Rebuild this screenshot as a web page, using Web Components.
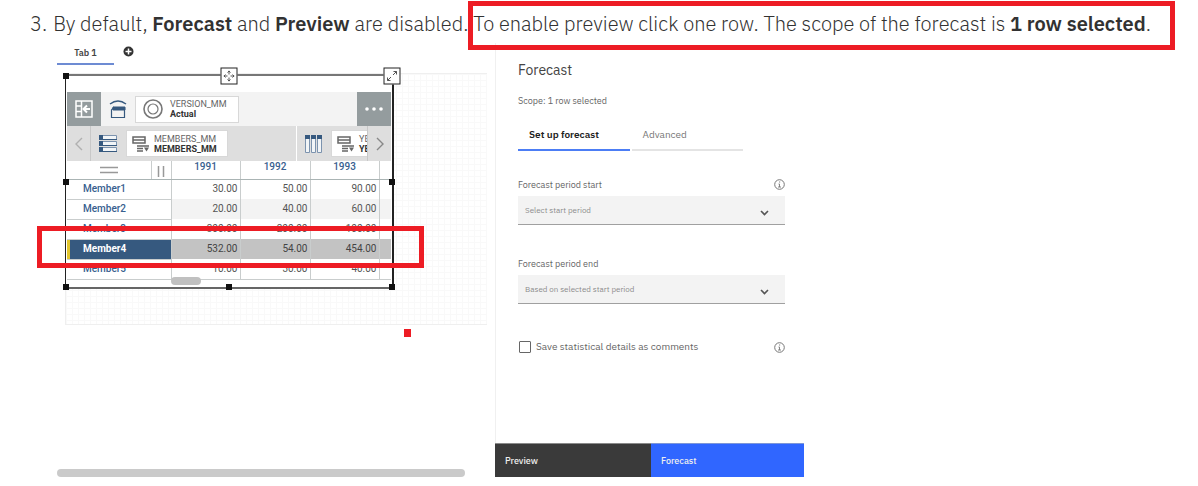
<!DOCTYPE html>
<html lang="en">
<head>
<meta charset="utf-8">
<title>Forecast</title>
<style>
    body {
        margin: 0;
        background: #fff;
        color: #323232;
        font-family: "IBM Plex Sans", Inter, sans-serif;
    }
</style>
</head>
<body>
<guide-step>
    <guide-note number="3">By default, <b>Forecast</b> and <b>Preview</b> are disabled. To enable preview click one row. The scope of the forecast is <b>1 row selected</b>.</guide-note>
    <work-space>
        <book-view slot="book">
            <cube-viewer></cube-viewer>
        </book-view>
        <forecast-panel slot="panel"></forecast-panel>
    </work-space>
    <mark-box style="--x:468px;--y:1px;--w:707px;--h:49px"></mark-box>
    <mark-box style="--x:37px;--y:226px;--w:387px;--h:42px"></mark-box>
    <mark-box solid style="--x:404px;--y:329px;--w:7px;--h:8px"></mark-box>
</guide-step>
<script>
const define = (name, html, setup) => customElements.define(name, class extends HTMLElement {
    constructor() {
        super()
            .attachShadow({ mode: "open" })
            .innerHTML = html;
    }
    connectedCallback() {
        if (setup) setup.call(this, this.shadowRoot);
    }
});

define("guide-step", `
    <style>
    :host { display: block; position: relative; }
    </style>
    <slot></slot>`);

define("guide-note", `
    <style>
    :host {
        display: flex;
        gap: 6px;
        padding: 10px 0 5px 30px;
        font-size: 20px;
        font-weight: 300;
        line-height: 28px;
        white-space: nowrap;
    }
    ::slotted(b) { font-weight: 600; }
    </style>
    <span class="number"></span>
    <span><slot></slot></span>`,
    function (root) {
        root.querySelector(".number").textContent = this.getAttribute("number") + ".";
    });

// red annotation rectangle lying over the page
define("mark-box", `
    <style>
    :host {
        position: absolute;
        box-sizing: border-box;
        left: var(--x);
        top: var(--y);
        width: var(--w);
        height: var(--h);
        border: 5px solid #ed1c24;
        pointer-events: none;
    }
    :host([solid]) { border: 0; background: #ed1c24; }
    </style>`);

define("work-space", `
    <style>
    :host {
        display: grid;
        grid-template-columns: 438fr 309fr 394fr;
        padding-left: 57px;
    }
    </style>
    <slot name="book"></slot>
    <slot name="panel"></slot>`);

define("book-view", `
    <style>
    :host { display: flex; flex-direction: column; }
    .tabs {
        display: flex;
        align-items: center;
        gap: 9px;
        height: 22px;
        margin-bottom: 8px;
    }
    button {
        box-sizing: border-box;
        padding: 0;
        border: 0;
        background: none;
        color: #444;
        font: 600 9px "IBM Plex Sans", Inter, sans-serif;
    }
    .tab {
        width: 57px;
        height: 22px;
        padding-bottom: 2px;
        border-bottom: 2px solid #6d8bd3;
    }
    .add { display: flex; padding-bottom: 6px; }
    .canvas {
        position: relative;
        height: 250px;
        margin: 0 8px auto;
        border: 1px solid #efefef;
        border-right: 0;
        background:
            repeating-linear-gradient(90deg, #f9f9f9 0 1px, transparent 1px 6px),
            repeating-linear-gradient(#f9f9f9 0 1px, transparent 1px 6px);
    }
    .scroll {
        height: 8px;
        margin-right: 30px;
        border-radius: 4px;
        background: #cacaca;
    }
    </style>
    <div class="tabs">
        <button class="tab">Tab 1</button>
        <button class="add" aria-label="Add tab">
            <svg width="11" height="11" viewBox="0 0 11 11"><circle cx="5.500" cy="5.500" r="5" fill="#333"/><path d="M5.500 2.500v6M2.500 5.500h6" stroke="#fff" stroke-width="1.500"/></svg>
        </button>
    </div>
    <div class="canvas"><slot></slot></div>
    <div class="scroll"></div>`);

define("member-tile", `
    <style>
    :host {
        display: flex;
        flex: none;
        align-items: center;
        gap: 7px;
        box-sizing: border-box;
        height: 27px;
        padding: 0 7px;
        border: 1px solid #d8d8d8;
        background: #fff;
        color: #666;
        font: 9px/10px Roboto, sans-serif;
        white-space: nowrap;
    }
    b { display: block; color: #333; font-weight: 700; }
    .set { display: none; }
    :host([kind=set]) { gap: 4px; padding: 0 5px; }
    :host([kind=set]) .set { display: block; }
    :host([kind=set]) .single { display: none; }
    </style>
    <svg class="single" width="20" height="20" viewBox="0 0 20 20" fill="none" stroke="#777"><circle cx="10" cy="10" r="9" stroke-width="1.600"/><circle cx="10" cy="10" r="5" stroke-width="1.200"/></svg>
    <svg class="set" width="18" height="18" viewBox="0 0 18 18" fill="none" stroke="#666"><path d="M1 2h12v6H1zM1 5h12" stroke-width="1.500"/><path d="M5 11h12M5 13.500h6M5 16h6" stroke-width="1.300"/><path d="M12 12.500h5l-2.500 4z" fill="#666" stroke="none"/></svg>
    <span><span class="name"></span><b><slot></slot></b></span>`,
    function (root) {
        root.querySelector(".name").textContent = this.getAttribute("name");
    });

define("cube-viewer", `
    <style>
    :host {
        position: absolute;
        left: -1px;
        top: 0;
        box-sizing: border-box;
        width: 329px;
        height: 215px;
        padding: 16px 1px 0;
        border: solid #222;
        border-width: 2px 2px 2px 1px;
        border-top-color: #777;
        border-bottom-color: #666;
        background: #fff;
        font-family: Roboto, sans-serif;
    }
    .bar {
        display: flex;
        align-items: center;
        height: 34px;
        background: #f3f3f3;
    }
    .bar button {
        display: grid;
        place-items: center;
        flex: none;
        width: 34px;
        height: 34px;
        padding: 0;
        border: 0;
        background: #949c9e;
    }
    .bar > svg { flex: none; margin: 0 8px; }
    .more { margin-left: auto; }
    .dims { height: 35px; background: #dedede; }
    .dims button {
        width: 24px;
        height: 35px;
        background: #dedede;
        border-right: 1px solid #c8c8c8;
    }
    .dims .next { border: 0; border-left: 1px solid #c8c8c8; }
    .rows, .cols {
        display: flex;
        align-items: center;
        height: 35px;
        overflow: hidden;
    }
    .rows { flex: 1; border-right: 1px solid #fff; }
    .rows svg { margin: 0 9px 0 8px; }
    .cols { width: 70px; }
    .cols svg { flex: none; margin: 0 9px 0 8px; }
    table {
        width: 100%;
        border-collapse: collapse;
        table-layout: fixed;
        color: #555;
        font-size: 10px;
        line-height: 12px;
    }
    th, td {
        box-sizing: border-box;
        height: 20px;
        padding: 0 2px 0 0;
        border-right: 1px solid #c9cdcd;
        text-align: right;
        font-weight: 400;
    }
    thead th {
        height: 18px;
        padding: 0;
        border-bottom: 1px solid #aab4b4;
        text-align: center;
        color: #38608f;
        font-weight: 500;
        vertical-align: top;
    }
    thead th svg { display: block; margin: 5px auto 0; }
    tbody th {
        padding: 0 0 0 16px;
        border-bottom: 1px solid #c9cdcd;
        text-align: left;
        color: #38608f;
        font-weight: 500;
    }
    tr > :last-child { border-right: 0; }
    tbody tr:nth-child(even) td { background: #f3f3f3; }
    tbody tr.selected td { background: #c3c3c3; color: #444; }
    tbody tr.selected th {
        background: #36597f;
        box-shadow: inset 3px 0 #e2c62d;
        color: #fff;
        font-weight: 700;
    }
    tbody tr:last-child > * { border-bottom: 1px solid #c9cdcd; }
    .scroll {
        position: absolute;
        left: 105px;
        bottom: 2px;
        width: 30px;
        height: 8px;
        border-radius: 4px;
        background: #c0c0c0;
    }
    .handle {
        position: absolute;
        width: 6px;
        height: 6px;
        background: #111;
        transform: translate(-50%, -50%);
    }
    .tool {
        position: absolute;
        display: grid;
        place-items: center;
        box-sizing: border-box;
        width: 17px;
        height: 17px;
        padding: 0;
        border: 1px solid #222;
        background: #fff;
        transform: translate(-50%, -50%);
    }
    </style>
    <div class="bar">
        <button aria-label="Overview">
            <svg width="18" height="18" viewBox="0 0 18 18" fill="none" stroke="#fff"><path d="M1 1h16v16H1zM6.500 1v16M1 6h5M1 11.500h5" stroke-width="1.500"/><path d="M15 9H9M12 5.500 8.500 9l3.500 3.500" stroke-width="2"/></svg>
        </button>
        <svg width="18" height="20" viewBox="0 0 18 20" fill="none" stroke="#36597f"><path d="M1 5q8-6 16 0" stroke-width="1.500"/><path d="M4 8h12v3H4z" fill="#36597f"/><path d="M5 8 2.500 11v7.500h13V9" stroke-width="1.200"/></svg>
        <member-tile name="VERSION_MM" style="width:104px">Actual</member-tile>
        <button class="more" aria-label="More">
            <svg width="18" height="4" viewBox="0 0 18 4" fill="#fff"><circle cx="2" cy="2" r="1.800"/><circle cx="9" cy="2" r="1.800"/><circle cx="16" cy="2" r="1.800"/></svg>
        </button>
    </div>
    <div class="bar dims">
        <button aria-label="Previous"><svg width="8" height="14" viewBox="0 0 8 14" fill="none" stroke="#b0b0b0" stroke-width="1.400"><path d="M7 1 1 7l6 6"/></svg></button>
        <div class="rows">
            <svg width="18" height="18" viewBox="0 0 18 18" fill="#f2f5f7" stroke="#7c93ae"><path d="M.5 .5h17v4H.5zM.5 6.500h17v4H.5zM.5 12.500h17v4H.5z"/><path d="M0 0h4v5H0zM0 6h4v5H0zM0 12h4v5H0zM4 4h14v1H4zM4 10h14v1H4zM4 16h14v1H4z" fill="#36597f" stroke="none"/></svg>
            <member-tile kind="set" name="MEMBERS_MM" style="width:102px">MEMBERS_MM</member-tile>
        </div>
        <div class="cols">
            <svg width="17" height="18" viewBox="0 0 17 18" fill="#f2f5f7" stroke="#7c93ae"><path d="M.5 .5h4v17h-4zM6.500 .5h4v17h-4zM12.500 .5h4v17h-4z"/><path d="M0 0h5v4H0zM6 0h5v4H6zM12 0h5v4h-5z" fill="#36597f" stroke="none"/></svg>
            <member-tile kind="set" name="YEARS_MM">YEARS_MM</member-tile>
        </div>
        <button class="next" aria-label="Next"><svg width="8" height="14" viewBox="0 0 8 14" fill="none" stroke="#888" stroke-width="1.400"><path d="m1 1 6 6-6 6"/></svg></button>
    </div>
    <table>
        <colgroup><col style="width:84px"><col style="width:20px"><col style="width:69px"><col style="width:70px"><col style="width:69px"><col></colgroup>
        <thead>
            <tr>
                <th aria-label="Rows"><svg width="18" height="8" viewBox="0 0 18 8" stroke="#999" stroke-width="1.500"><path d="M0 1.500h18M0 6.500h18"/></svg></th>
                <th aria-label="Columns"><svg width="8" height="11" viewBox="0 0 8 11" stroke="#999" stroke-width="1.500"><path d="M1.500 0v11M6.500 0v11"/></svg></th>
                <th>1991</th><th>1992</th><th>1993</th><th></th>
            </tr>
        </thead>
        <tbody></tbody>
    </table>
    <div class="scroll"></div>
    <span class="handle" style="left:0;top:0"></span>
    <span class="handle" style="left:0;top:50%"></span>
    <span class="handle" style="left:0;top:100%"></span>
    <span class="handle" style="left:50%;top:100%"></span>
    <span class="handle" style="left:100%;top:50%"></span>
    <span class="handle" style="left:100%;top:100%"></span>
    <button class="tool" style="left:50%;top:0" aria-label="Move"><svg width="11" height="11" viewBox="0 0 11 11" fill="none" stroke="#555"><path d="M5.500 0v4M5.500 7v4M0 5.500h4M7 5.500h4M4 2l1.500-1.500L7 2M4 9l1.500 1.500L7 9M2 4 .5 5.500 2 7M9 4l1.500 1.500L9 7"/></svg></button>
    <button class="tool" style="left:100%;top:0" aria-label="Expand"><svg width="11" height="11" viewBox="0 0 11 11" fill="none" stroke="#555"><path d="M1 10l3.500-3.500M6.500 4.500 10 1M7 1h3v3M1 7v3h3"/></svg></button>`,
    function (root) {
        const rows = [
            ["Member1", "30.00", "50.00", "90.00"],
            ["Member2", "20.00", "40.00", "60.00"],
            ["Member3", "300.00", "200.00", "100.00"],
            ["Member4", "532.00", "54.00", "454.00"],
            ["Member5", "10.00", "30.00", "40.00"]
        ];
        root.querySelector("tbody").innerHTML = rows.map(([name, ...values]) => `
            <tr${name == "Member4" ? ` class="selected"` : ""}>
                <th colspan="2" scope="row">${name}</th>
                ${values.map(value => `<td>${value}</td>`).join("")}<td></td>
            </tr>`).join("");
    });

define("info-icon", `
    <style>
    :host { display: block; height: 11px; }
    svg { display: block; }
    </style>
    <svg width="11" height="11" viewBox="0 0 11 11" fill="none" stroke="#777"><circle cx="5.500" cy="5.500" r="4.800"/><path d="M4.500 5h1v3M4 8h3M5 3h1.200" stroke-width=".9"/></svg>`);

define("period-select", `
    <style>
    :host { display: block; margin-bottom: 31px; }
    .head {
        display: flex;
        align-items: center;
        justify-content: space-between;
        height: 14px;
        margin-bottom: 5px;
    }
    label { color: #666; font-size: 9px; }
    .box { display: grid; align-items: center; }
    .box > * { grid-area: 1 / 1; }
    select {
        appearance: none;
        width: 100%;
        height: 29px;
        padding: 0 7px;
        border: 0;
        border-bottom: 1px solid #a0a0a0;
        border-radius: 0;
        background: #f3f3f3;
        color: #8c8c8c;
        font: 8px "IBM Plex Sans", Inter, sans-serif;
    }
    .box svg {
        justify-self: end;
        margin: 4px 16px 0 0;
        pointer-events: none;
    }
    info-icon[hidden] { display: none; }
    </style>
    <div class="head"><label for="period"></label><info-icon></info-icon></div>
    <div class="box">
        <select id="period"><option></option></select>
        <svg width="9" height="6" viewBox="0 0 9 6" fill="none" stroke="#555" stroke-width="1.600"><path d="M1 1l3.500 3.500L8 1"/></svg>
    </div>`,
    function (root) {
        root.querySelector("label").textContent = this.getAttribute("label");
        root.querySelector("option").textContent = this.getAttribute("value");
        root.querySelector("info-icon").hidden = !this.hasAttribute("info");
    });

define("forecast-panel", `
    <style>
    :host {
        display: flex;
        flex-direction: column;
    }
    .content {
        padding: 17px 19px 89px 22px;
        border-left: 1px solid #f0f0f0;
    }
    h2 {
        margin: 0 0 15px;
        color: #444;
        font-size: 14px;
        font-weight: 400;
        line-height: 20px;
    }
    p {
        margin: 0 0 14px;
        color: #666;
        font-size: 9px;
        line-height: 12px;
    }
    .tabs {
        display: flex;
        gap: 2px;
        margin: 0 42px 26px 0;
    }
    .tabs button {
        flex: 1;
        height: 30px;
        padding: 0 0 1px 11px;
        border: 0;
        border-bottom: 2px solid #e4e4e4;
        background: none;
        color: #777;
        text-align: left;
        font: 10px "IBM Plex Sans", Inter, sans-serif;
    }
    .tabs .active {
        border-color: #4c7df5;
        color: #222;
        font-weight: 600;
    }
    .check {
        display: flex;
        align-items: center;
        gap: 5px;
        margin-top: 36px;
        color: #666;
        font-size: 10px;
        line-height: 14px;
    }
    .check input {
        appearance: none;
        width: 12px;
        height: 12px;
        margin: 0 0 0 1px;
        border: 1px solid #666;
        border-radius: 1px;
    }
    .check info-icon { margin-left: auto; }
    footer {
        display: grid;
        grid-template-columns: 156fr 153fr;
        margin-top: auto;
    }
    footer button {
        height: 34px;
        padding: 0 10px;
        border: 0;
        border-top: 1px solid #8a8a8a;
        background: #3a3a3a;
        color: #eee;
        text-align: left;
        font: 500 9px "IBM Plex Sans", Inter, sans-serif;
    }
    footer .primary { border-color: #7d96d8; background: #3066ff; }
    </style>
    <div class="content">
        <h2>Forecast</h2>
        <p>Scope: 1 row selected</p>
        <div class="tabs">
            <button class="active">Set up forecast</button>
            <button>Advanced</button>
        </div>
        <period-select label="Forecast period start" value="Select start period" info></period-select>
        <period-select label="Forecast period end" value="Based on selected start period"></period-select>
        <div class="check">
            <input type="checkbox" id="save">
            <label for="save">Save statistical details as comments</label>
            <info-icon></info-icon>
        </div>
    </div>
    <footer>
        <button>Preview</button>
        <button class="primary">Forecast</button>
    </footer>`);
</script>
</body>
</html>
